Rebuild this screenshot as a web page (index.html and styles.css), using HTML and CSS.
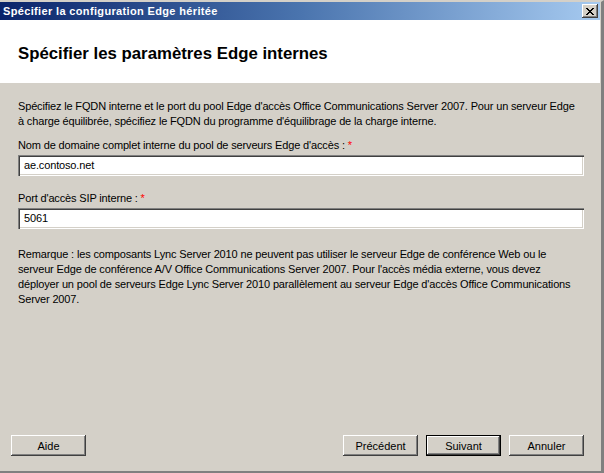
FILE: index.html
```html
<!DOCTYPE html>
<html lang="fr">
<head>
<meta charset="utf-8">
<title>Spécifier la configuration Edge héritée</title>
<link rel="stylesheet" href="styles.css">
</head>
<body>
<div class="window">
  <div class="titlebar">
    <span class="title">Spécifier la configuration Edge héritée</span>
    <span class="close" aria-label="Fermer">
      <svg width="8" height="7" viewBox="0 0 8 7" shape-rendering="crispEdges">
        <path d="M0 0h2v1H0zM6 0h2v1H6zM1 1h2v1H1zM5 1h2v1H5zM2 2h4v1H2zM3 3h2v1H3zM2 4h4v1H2zM1 5h2v1H1zM5 5h2v1H5zM0 6h2v1H0zM6 6h2v1H6z" fill="#000"/>
      </svg>
    </span>
  </div>
  <div class="header">
    <h1 class="heading">Spécifier les paramètres Edge internes</h1>
  </div>
  <div class="content">
    <p class="intro">Spécifiez le FQDN interne et le port du pool Edge d'accès Office Communications Server 2007. Pour un serveur Edge<br>à charge équilibrée, spécifiez le FQDN du programme d'équilibrage de la charge interne.</p>
    <label class="label">Nom de domaine complet interne du pool de serveurs Edge d'accès : <span class="req">*</span></label>
    <div class="input">ae.contoso.net</div>
    <label class="label label-2">Port d'accès SIP interne : <span class="req">*</span></label>
    <div class="input">5061</div>
    <p class="note">Remarque : les composants Lync Server 2010 ne peuvent pas utiliser le serveur Edge de conférence Web ou le<br>serveur Edge de conférence A/V Office Communications Server 2007. Pour l'accès média externe, vous devez<br>déployer un pool de serveurs Edge Lync Server 2010 parallèlement au serveur Edge d'accès Office Communications<br>Server 2007.</p>
  </div>
  <div class="footer">
    <button class="btn">Aide</button>
    <div class="spacer"></div>
    <button class="btn">Précédent</button>
    <button class="btn btn-default">Suivant</button>
    <button class="btn">Annuler</button>
  </div>
</div>
</body>
</html>
```

FILE: styles.css
```css
* { box-sizing: border-box; }
html, body { margin: 0; padding: 0; background: #d4d0c8; }
body {
  font-family: "Liberation Sans", Arial, sans-serif;
  font-size: 11px;
  color: #000;
}
.window {
  width: 604px;
  height: 473px;
  display: flex;
  flex-direction: column;
  background: #d4d0c8;
  border-top: 2px solid #d4d0c8;
  border-right: 3px solid #808080;
  border-bottom: 2px solid #808080;
  box-shadow: inset -1px 0 0 #d4d0c8;
}
.titlebar {
  height: 18px;
  display: flex;
  align-items: center;
  padding: 0 2px 0 3px;
  margin-right: 1px;
  background: linear-gradient(to right, #0a246a 0%, #4a74ae 50%, #a6caf0 100%);
}
.title {
  flex: 1;
  color: #fff;
  font-weight: bold;
  font-size: 11px;
  letter-spacing: 0.35px;
  white-space: nowrap;
}
.close {
  width: 16px;
  height: 14px;
  display: flex;
  align-items: center;
  justify-content: center;
  background: #d4d0c8;
  box-shadow: inset -1px -1px 0 #404040, inset 1px 1px 0 #fff, inset -2px -2px 0 #808080;
  padding-right: 1px;
}
.header {
  height: 64px;
  background: #fff;
  margin-right: 1px;
  display: flex;
  align-items: center;
  padding: 0 18px;
  border-bottom: 1px solid #d4d0c8;
}
.heading {
  margin: 0;
  font-size: 16.8px;
  font-weight: bold;
  padding-top: 4px;
}
.content {
  flex: 1;
  padding: 15px 17px 0 18px;
  letter-spacing: -0.15px;
}
.intro {
  margin: 0;
  line-height: 15px;
  white-space: nowrap;
}
.label {
  display: block;
  margin-top: 9px;
  line-height: 15px;
  margin-bottom: 2px;
}
.label-2 { margin-top: 15px; }
.req { color: #ff0000; }
.input {
  height: 21px;
  background: #fff;
  padding: 3px 6px;
  line-height: 15px;
  box-shadow: inset 1px 1px 0 #808080, inset 2px 2px 0 #404040, inset -1px -1px 0 #fff, inset -2px -2px 0 #d4d0c8;
}
.note {
  margin: 18px 0 0;
  line-height: 15px;
  white-space: nowrap;
}
.footer {
  display: flex;
  gap: 8px;
  padding: 0 17px 15px 11px;
}
.spacer { flex: 1; }
.btn {
  width: 75px;
  height: 21px;
  font-family: inherit;
  font-size: 11px;
  color: #000;
  background: #d4d0c8;
  border: 0;
  padding: 0;
  box-shadow: inset -1px -1px 0 #404040, inset 1px 1px 0 #fff, inset -2px -2px 0 #808080;
}
.btn-default {
  box-shadow: inset 0 0 0 1px #000, inset -2px -2px 0 #404040, inset 2px 2px 0 #fff, inset -3px -3px 0 #808080;
}
```
